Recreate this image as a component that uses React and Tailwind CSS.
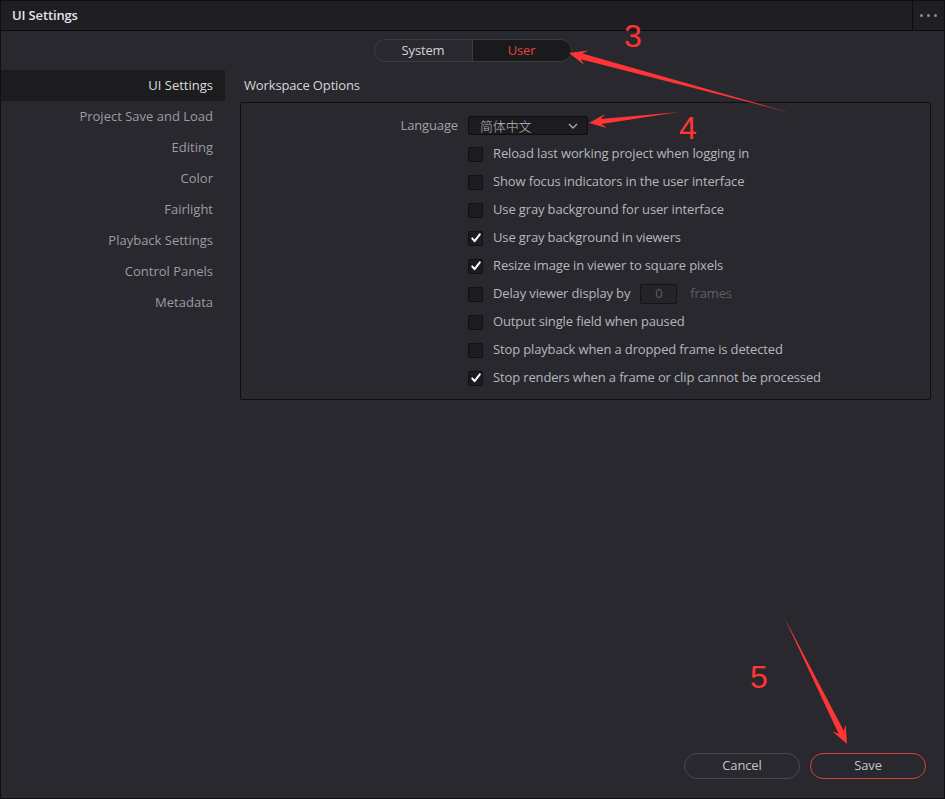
import React from 'react';

const NAV = [
  'UI Settings',
  'Project Save and Load',
  'Editing',
  'Color',
  'Fairlight',
  'Playback Settings',
  'Control Panels',
  'Metadata',
];

const OPTIONS = [
  { label: 'Reload last working project when logging in', checked: false },
  { label: 'Show focus indicators in the user interface', checked: false },
  { label: 'Use gray background for user interface', checked: false },
  { label: 'Use gray background in viewers', checked: true },
  { label: 'Resize image in viewer to square pixels', checked: true },
  { label: 'Delay viewer display by', checked: false, delay: true },
  { label: 'Output single field when paused', checked: false },
  { label: 'Stop playback when a dropped frame is detected', checked: false },
  { label: 'Stop renders when a frame or clip cannot be processed', checked: true },
];

// red annotation arrows: tapered shaft + swept head
function arrowPoints([tx, ty], [px, py], head, half, neck) {
  const dx = px - tx;
  const dy = py - ty;
  const len = Math.hypot(dx, dy);
  const ux = dx / len;
  const uy = dy / len;
  const nx = -uy;
  const ny = ux;
  const at = (d, o) => [px - ux * d + nx * o, py - uy * d + ny * o];
  const pts = [
    [tx, ty],
    at(head * 0.72, neck),
    at(head, half),
    [px, py],
    at(head, -half),
    at(head * 0.72, -neck),
  ];
  return pts.map((p) => p.map((v) => v.toFixed(1)).join(',')).join(' ');
}

function Checkbox({ checked }) {
  return (
    <span className="w-[15px] h-[15px] rounded-[2px] bg-[#1c1c1f] border border-[#111113] flex items-center justify-center shrink-0">
      {checked && (
        <svg width="12" height="12" viewBox="0 0 12 12">
          <path d="M2.2 6.4 L4.6 9.2 L9.8 2.4" fill="none" stroke="#ffffff" strokeWidth="2" strokeLinecap="round" strokeLinejoin="round" />
        </svg>
      )}
    </span>
  );
}

export default function App() {
  return (
    <div className="relative w-[945px] h-[799px] bg-[#28282e] border border-[#101012] flex flex-col overflow-hidden font-['Open_Sans',sans-serif] text-[13px] tracking-[-0.14px]">
      {/* Title bar */}
      <div className="h-[30px] shrink-0 bg-[#1f1f23] border-b border-[#0c0c0e] flex items-center">
        <div className="flex-1 pl-[11px] text-[#e4e4e6] font-semibold">UI Settings</div>
        <div className="w-[32px] h-full border-l border-[#0c0c0e] flex items-center justify-center gap-[4px]">
          <span className="w-[3px] h-[3px] rounded-full bg-[#8a8a90]" />
          <span className="w-[3px] h-[3px] rounded-full bg-[#8a8a90]" />
          <span className="w-[3px] h-[3px] rounded-full bg-[#8a8a90]" />
        </div>
      </div>

      {/* System / User tabs */}
      <div className="mt-[8px] flex justify-center">
        <div className="flex h-[23px] rounded-full border border-[#3b3b41] overflow-hidden">
          <div className="w-[98px] flex items-center justify-center text-[#d4d4d8] border-r border-[#3b3b41]">System</div>
          <div className="w-[98px] flex items-center justify-center text-[#e0463c] bg-[#1a1a1d]">User</div>
        </div>
      </div>

      <div className="mt-[8px] flex flex-1 min-h-0">
        {/* Sidebar */}
        <div className="w-[224px] shrink-0 flex flex-col">
          {NAV.map((item, i) => (
            <div
              key={item}
              className={`h-[31px] flex items-center justify-end pr-[12px] tracking-normal ${
                i === 0 ? 'bg-[#1c1c1f] text-[#dcdcdf]' : 'text-[#9c9ca2]'
              }`}
            >
              {item}
            </div>
          ))}
        </div>

        {/* Main */}
        <div className="flex-1 pl-[15px] pr-[13px] flex flex-col">
          <div className="h-[32px] flex items-center pl-[4px] text-[#d6d6da]">Workspace Options</div>
          <div className="border border-[#0f0f11] rounded-[2px] pt-[13px] pb-[7px]">
            <div className="flex items-center h-[19px]">
              <div className="w-[217px] text-right text-[#a2a2a8]">Language</div>
              <div className="ml-[10px] w-[120px] h-[19px] bg-[#1c1c1f] border border-[#0f0f11] rounded-[2px] flex items-center pl-[11px] pr-[9px] text-[#bdbdc2]">
                <span className="flex-1 font-['Noto_Sans_CJK_SC',sans-serif] font-light">简体中文</span>
                <svg width="10" height="6" viewBox="0 0 10 6">
                  <path d="M1 1 L5 5 L9 1" fill="none" stroke="#a8a8ae" strokeWidth="1.4" />
                </svg>
              </div>
            </div>
            <div className="mt-[5px] pl-[227px] flex flex-col">
              {OPTIONS.map((o) => (
                <div key={o.label} className="h-[28px] flex items-center">
                  <Checkbox checked={o.checked} />
                  <span className="ml-[10px] text-[#b4b7be]">{o.label}</span>
                  {o.delay && (
                    <>
                      <span className="ml-[10px] w-[37px] h-[20px] bg-[#242428] border border-[#151517] rounded-[2px] flex items-center justify-center text-[#5f5f66]">0</span>
                      <span className="ml-[13px] text-[#5f5f66]">frames</span>
                    </>
                  )}
                </div>
              ))}
            </div>
          </div>

          <div className="flex-1" />
          <div className="flex justify-end gap-[10px] pb-[19px] pr-[5px]">
            <button className="w-[116px] h-[26px] rounded-full border border-[#48484e] text-[#c6c6ca]">Cancel</button>
            <button className="w-[116px] h-[26px] rounded-full border border-[#d8413a] text-[#c6c6ca]">Save</button>
          </div>
        </div>
      </div>

      {/* Red annotations */}
      <svg className="absolute inset-0 pointer-events-none" width="945" height="799" viewBox="0 0 945 799">
        <g fill="#ff3535">
          <polygon points={arrowPoints([790, 112], [568, 52], 18, 7.5, 3)} />
          <polygon points={arrowPoints([678, 111], [588, 122], 17, 7, 2.6)} />
          <polygon points={arrowPoints([783, 616], [846, 743], 18, 7.5, 3)} />
          <text x="623" y="46" fontSize="32" fontFamily="'Liberation Sans', sans-serif">3</text>
          <text x="678" y="138" fontSize="32" fontFamily="'Liberation Sans', sans-serif">4</text>
          <text x="749" y="687" fontSize="32" fontFamily="'Liberation Sans', sans-serif">5</text>
        </g>
      </svg>
    </div>
  );
}
